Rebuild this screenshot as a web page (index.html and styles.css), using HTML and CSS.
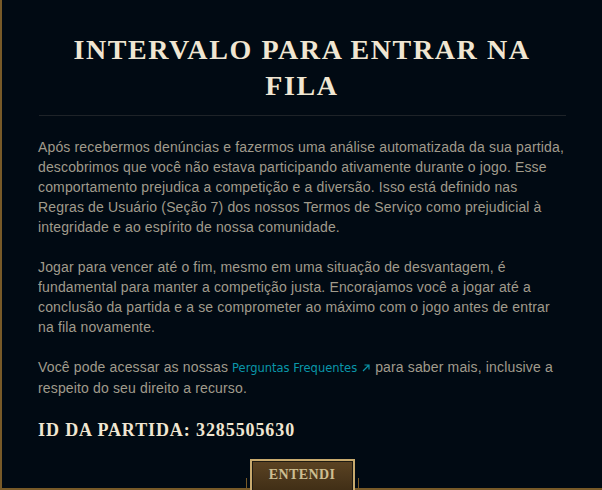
FILE: index.html
```html
<!DOCTYPE html>
<html lang="pt-BR">
<head>
<meta charset="utf-8">
<link rel="stylesheet" href="styles.css">
</head>
<body>
<div class="frame">
  <h1 class="title">INTERVALO PARA ENTRAR NA FILA</h1>
  <div class="divider"></div>
  <p class="para">Após recebermos denúncias e fazermos uma análise automatizada da sua partida, descobrimos que você não estava participando ativamente durante o jogo. Esse comportamento prejudica a competição e a diversão. Isso está definido nas Regras de Usuário (Seção 7) dos nossos Termos de Serviço como prejudicial à integridade e ao espírito de nossa comunidade.</p>
  <p class="para">Jogar para vencer até o fim, mesmo em uma situação de desvantagem, é fundamental para manter a competição justa. Encorajamos você a jogar até a conclusão da partida e a se comprometer ao máximo com o jogo antes de entrar na fila novamente.</p>
  <p class="para">Você pode acessar as nossas<a class="link" href="#">Perguntas Frequentes<svg class="ext" width="10" height="10" viewBox="0 0 10 10"><path d="M2 8 L8 2 M3.5 2 H8 V6.5" fill="none" stroke="currentColor" stroke-width="1.2"/></svg></a>para saber mais, inclusive a respeito do seu direito a recurso.</p>
  <div class="matchid">ID DA PARTIDA: 3285505630</div>
  <div class="footer">
    <div class="btnwrap">
      <button class="btn">ENTENDI</button>
    </div>
  </div>
</div>
</body>
</html>
```
FILE: styles.css
```css
html, body {
  margin: 0;
  padding: 0;
  background: #010a13;
  overflow: hidden;
}
.frame {
  box-sizing: border-box;
  width: 602px;
  height: 490px;
  border-left: 2px solid #785a28;
  border-bottom: 2px solid #785a28;
  background: #010a13;
  padding: 32px 36px 0 36px;
}
.title {
  margin: 0;
  font-family: "Liberation Serif", serif;
  font-weight: 700;
  font-size: 28px;
  line-height: 36px;
  letter-spacing: 1.6px;
  color: #f0e6d2;
  text-align: center;
}
.divider {
  height: 1px;
  background: #1e2328;
  margin: 11px 0 21px 1px;
}
.para {
  margin: 0 0 20px 0;
  font-family: "Liberation Sans", sans-serif;
  font-size: 14px;
  line-height: 20px;
  letter-spacing: 0.15px;
  color: #a09b8c;
}
.link {
  display: inline-block;
  margin: 0 4px;
  line-height: 20px;
  color: #0a96aa;
  text-decoration: none;
  font-family: "DejaVu Sans", sans-serif;
  font-size: 11.5px;
  letter-spacing: 0;
}
.ext {
  display: inline-block;
  margin-left: 4px;
  vertical-align: -1px;
}
.matchid {
  margin-top: 14px;
  font-family: "Liberation Serif", serif;
  font-weight: 700;
  font-size: 18px;
  line-height: 24px;
  letter-spacing: 0.9px;
  color: #f0e6d2;
}
.footer {
  display: flex;
  justify-content: center;
  margin-top: 17px;
}
.btnwrap {
  position: relative;
}
.btnwrap::before, .btnwrap::after {
  content: "";
  position: absolute;
  top: 19px;
  width: 1px;
  height: 14px;
  background: #785a28;
}
.btnwrap::before { left: -4px; }
.btnwrap::after { right: -4px; }
.btn {
  display: block;
  width: 105px;
  height: 38px;
  margin: 0;
  padding: 0 0 6px 0;
  border: 2px solid #c8aa6e;
  box-shadow: inset 0 0 0 1px #1e1a12;
  background: linear-gradient(#5b4323, #3c2b14);
  color: #cdbe91;
  font-family: "Liberation Serif", serif;
  font-weight: 700;
  font-size: 14px;
  letter-spacing: 0.4px;
  cursor: pointer;
}
```
